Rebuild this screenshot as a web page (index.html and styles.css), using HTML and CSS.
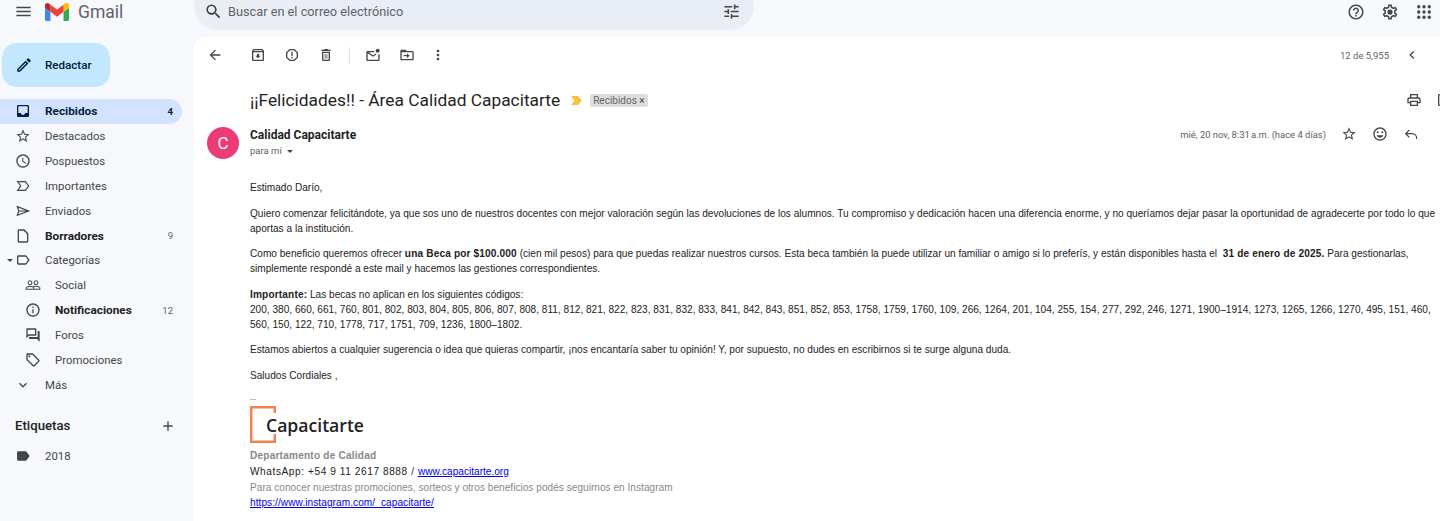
FILE: index.html
```html
<!DOCTYPE html>
<html lang="es">
<head>
    <meta charset="UTF-8">
    <meta name="viewport" content="width=device-width, initial-scale=1.0">
    <title>¡¡Felicidades!! - Área Calidad Capacitarte - Gmail</title>
    <link rel="stylesheet" href="styles.css">
</head>
<body>
    <svg class="sprite" aria-hidden="true">
        <symbol id="i-menu" viewBox="0 0 24 24"><path d="M3 18h18v-2H3v2zm0-5h18v-2H3v2zm0-7v2h18V6H3z"/></symbol>
        <symbol id="i-search" viewBox="0 0 24 24"><path d="M15.5 14h-.79l-.28-.27A6.471 6.471 0 0 0 16 9.5 6.5 6.5 0 1 0 9.5 16c1.61 0 3.09-.59 4.23-1.57l.27.28v.79l5 4.99L20.49 19l-4.99-5zm-6 0C7.01 14 5 11.99 5 9.5S7.01 5 9.5 5 14 7.01 14 9.5 11.99 14 9.5 14z"/></symbol>
        <symbol id="i-tune" viewBox="0 0 24 24"><path d="M3 17v2h6v-2H3zM3 5v2h10V5H3zm10 16v-2h8v-2h-8v-2h-2v6h2zM7 9v2H3v2h4v2h2V9H7zm14 4v-2H11v2h10zm-6-4h2V7h4V5h-4V3h-2v6z"/></symbol>
        <symbol id="i-help" viewBox="0 0 24 24"><path d="M11 18h2v-2h-2v2zm1-16C6.48 2 2 6.48 2 12s4.48 10 10 10 10-4.48 10-10S17.52 2 12 2zm0 18c-4.41 0-8-3.59-8-8s3.59-8 8-8 8 3.59 8 8-3.59 8-8 8zm0-14c-2.21 0-4 1.79-4 4h2c0-1.1.9-2 2-2s2 .9 2 2c0 2-3 1.75-3 5h2c0-2.25 3-2.5 3-5 0-2.21-1.79-4-4-4z"/></symbol>
        <symbol id="i-settings" viewBox="0 0 24 24"><path d="M19.43 12.98c.04-.32.07-.64.07-.98 0-.34-.03-.66-.07-.98l2.11-1.65c.19-.15.24-.42.12-.64l-2-3.46c-.09-.16-.26-.25-.44-.25-.06 0-.12.01-.17.03l-2.49 1c-.52-.4-1.08-.73-1.69-.98l-.38-2.65C14.46 2.18 14.25 2 14 2h-4c-.25 0-.46.18-.49.42l-.38 2.65c-.61.25-1.17.59-1.69.98l-2.49-1c-.06-.02-.12-.03-.18-.03-.17 0-.34.09-.43.25l-2 3.46c-.13.22-.07.49.12.64l2.11 1.65c-.04.32-.07.65-.07.98 0 .33.03.66.07.98l-2.11 1.65c-.19.15-.24.42-.12.64l2 3.46c.09.16.26.25.44.25.06 0 .12-.01.17-.03l2.49-1c.52.4 1.08.73 1.69.98l.38 2.65c.03.24.24.42.49.42h4c.25 0 .46-.18.49-.42l.38-2.65c.61-.25 1.17-.59 1.69-.98l2.49 1c.06.02.12.03.18.03.17 0 .34-.09.43-.25l2-3.46c.12-.22.07-.49-.12-.64l-2.11-1.65zm-1.98-1.71c.04.31.05.52.05.73 0 .21-.02.43-.05.73l-.14 1.13.89.7 1.08.84-.7 1.21-1.27-.51-1.04-.42-.9.68c-.43.32-.84.56-1.25.73l-1.06.43-.16 1.13-.2 1.35h-1.4l-.19-1.35-.16-1.13-1.06-.43c-.43-.18-.83-.41-1.23-.71l-.91-.7-1.06.43-1.27.51-.7-1.21 1.08-.84.89-.7-.14-1.13c-.03-.31-.05-.54-.05-.74s.02-.43.05-.73l.14-1.13-.89-.7-1.08-.84.7-1.21 1.27.51 1.04.42.9-.68c.43-.32.84-.56 1.25-.73l1.06-.43.16-1.13.2-1.35h1.39l.19 1.35.16 1.13 1.06.43c.43.18.83.41 1.23.71l.91.7 1.06-.43 1.27-.51.7 1.21-1.07.85-.89.7.14 1.13z"/><circle cx="12" cy="12" r="3.5"/></symbol>
        <symbol id="i-apps" viewBox="0 0 24 24"><circle cx="5" cy="5" r="2.2"/><circle cx="12" cy="5" r="2.2"/><circle cx="19" cy="5" r="2.2"/><circle cx="5" cy="12" r="2.2"/><circle cx="12" cy="12" r="2.2"/><circle cx="19" cy="12" r="2.2"/><circle cx="5" cy="19" r="2.2"/><circle cx="12" cy="19" r="2.2"/><circle cx="19" cy="19" r="2.2"/></symbol>
        <symbol id="i-edit" viewBox="0 0 24 24"><path d="M3 17.25V21h3.75L17.81 9.94l-3.75-3.75L3 17.25zM5.92 19H5v-.92l9.06-9.06.92.92L5.92 19zM20.71 7.04c.39-.39.39-1.02 0-1.41l-2.34-2.34c-.2-.2-.45-.29-.71-.29s-.51.09-.7.29l-1.83 1.83 3.75 3.75 1.83-1.83z"/></symbol>
        <symbol id="i-inbox" viewBox="0 0 24 24"><path d="M19 3H4.99c-1.11 0-1.98.89-1.98 2L3 19c0 1.1.88 2 1.99 2H19c1.1 0 2-.9 2-2V5c0-1.11-.9-2-2-2zm0 12h-4c0 1.66-1.35 3-3 3s-3-1.34-3-3H4.99V5H19v10z"/></symbol>
        <symbol id="i-star" viewBox="0 0 24 24"><path d="M22 9.24l-7.19-.62L12 2 9.19 8.63 2 9.24l5.46 4.73L5.82 21 12 17.27 18.18 21l-1.63-7.03L22 9.24zM12 15.4l-3.76 2.27 1-4.28-3.32-2.88 4.38-.38L12 6.1l1.71 4.04 4.38.38-3.32 2.88 1 4.28L12 15.4z"/></symbol>
        <symbol id="i-clock" viewBox="0 0 24 24"><path d="M11.99 2C6.47 2 2 6.48 2 12s4.47 10 9.99 10C17.52 22 22 17.52 22 12S17.52 2 11.99 2zM12 20c-4.42 0-8-3.58-8-8s3.58-8 8-8 8 3.58 8 8-3.58 8-8 8zm.5-13H11v6l5.25 3.15.75-1.23-4.5-2.67z"/></symbol>
        <symbol id="i-important" viewBox="0 0 24 24"><path class="line" d="M4 5.5h11.5l5 6.5-5 6.500H4l4.500-6.500z"/></symbol>
        <symbol id="i-send" viewBox="0 0 24 24"><path class="line" d="M3.500 5.500L20.500 12 3.500 18.500 5.800 12zM5.800 12h14.700"/></symbol>
        <symbol id="i-draft" viewBox="0 0 24 24"><path d="M14 2H6c-1.100 0-2 .9-2 2v16c0 1.100.9 2 2 2h12c1.100 0 2-.9 2-2V8l-6-6zM6 20V4h7l5 5v11H6z"/></symbol>
        <symbol id="i-label" viewBox="0 0 24 24"><path d="M17.630 5.840C17.270 5.330 16.670 5 16 5L5 5.010C3.900 5.010 3 5.900 3 7v10c0 1.100.9 1.990 2 1.990L16 19c.67 0 1.270-.33 1.630-.84L22 12l-4.370-6.160zM16 17H5V7h11l3.550 5L16 17z"/></symbol>
        <symbol id="i-label-full" viewBox="0 0 24 24"><path d="M17.630 5.840C17.270 5.330 16.670 5 16 5L5 5.010C3.900 5.010 3 5.900 3 7v10c0 1.100.9 1.990 2 1.990L16 19c.67 0 1.270-.33 1.630-.84L22 12l-4.370-6.160z"/></symbol>
        <symbol id="i-people" viewBox="0 0 24 24"><path d="M16.500 13c-1.200 0-3.070.34-4.500 1-1.430-.67-3.300-1-4.500-1C5.330 13 1 14.080 1 16.250V19h22v-2.750c0-2.170-4.330-3.250-6.500-3.250zm-4 4.500h-10v-1.250c0-.54 2.560-1.750 5-1.750s5 1.210 5 1.750v1.250zm9 0H14v-1.250c0-.46-.2-.86-.52-1.220.88-.3 1.960-.53 3.020-.53 2.440 0 5 1.210 5 1.750v1.250zM7.500 12c1.930 0 3.500-1.570 3.500-3.500S9.430 5 7.500 5 4 6.570 4 8.500 5.570 12 7.500 12zm0-5.500c1.100 0 2 .9 2 2s-.9 2-2 2-2-.9-2-2 .9-2 2-2zm9 5.500c1.930 0 3.500-1.570 3.500-3.500S18.430 5 16.500 5 13 6.570 13 8.500s1.570 3.500 3.500 3.500zm0-5.500c1.100 0 2 .9 2 2s-.9 2-2 2-2-.9-2-2 .9-2 2-2z"/></symbol>
        <symbol id="i-info" viewBox="0 0 24 24"><path d="M11 7h2v2h-2zm0 4h2v6h-2zm1-9C6.480 2 2 6.480 2 12s4.480 10 10 10 10-4.480 10-10S17.520 2 12 2zm0 18c-4.410 0-8-3.590-8-8s3.590-8 8-8 8 3.590 8 8-3.590 8-8 8z"/></symbol>
        <symbol id="i-forum" viewBox="0 0 24 24"><path d="M15 4v7H5.170L4 12.170V4h11m1-2H3c-.55 0-1 .45-1 1v14l4-4h10c.55 0 1-.45 1-1V3c0-.55-.45-1-1-1zm5 4h-2v9H6v2c0 .55.45 1 1 1h11l4 4V7c0-.55-.45-1-1-1z"/></symbol>
        <symbol id="i-tag" viewBox="0 0 24 24"><path d="M21.410 11.580l-9-9C12.050 2.220 11.550 2 11 2H4c-1.100 0-2 .9-2 2v7c0 .55.22 1.050.59 1.420l9 9c.36.36.86.58 1.410.58.55 0 1.050-.22 1.410-.59l7-7c.37-.36.59-.86.59-1.410 0-.55-.23-1.060-.59-1.420zM13 20.010L4 11V4h7v-.01l9 9-7 7.020z"/><circle cx="6.500" cy="6.500" r="1.500"/></symbol>
        <symbol id="i-down" viewBox="0 0 24 24"><path d="M16.590 8.590L12 13.170 7.410 8.590 6 10l6 6 6-6z"/></symbol>
        <symbol id="i-add" viewBox="0 0 24 24"><path d="M19 13h-6v6h-2v-6H5v-2h6V5h2v6h6v2z"/></symbol>
        <symbol id="i-back" viewBox="0 0 24 24"><path d="M20 11H7.830l5.590-5.590L12 4l-8 8 8 8 1.410-1.410L7.830 13H20v-2z"/></symbol>
        <symbol id="i-archive" viewBox="0 0 24 24"><path d="M20.540 5.230l-1.390-1.680C18.880 3.210 18.470 3 18 3H6c-.47 0-.88.21-1.160.55L3.460 5.230C3.170 5.570 3 6.020 3 6.500V19c0 1.100.9 2 2 2h14c1.100 0 2-.9 2-2V6.500c0-.48-.17-.93-.46-1.270zM6.240 5h11.520l.81.97H5.440l.8-.97zM5 19V8h14v11H5zm8.450-9h-2.900v3H8l4 4 4-4h-2.550z"/></symbol>
        <symbol id="i-report" viewBox="0 0 24 24"><path d="M15.730 3H8.270L3 8.270v7.460L8.270 21h7.460L21 15.730V8.270L15.730 3zM19 14.900L14.900 19H9.100L5 14.900V9.100L9.100 5h5.800L19 9.100v5.800zM11 7h2v7h-2zm0 8h2v2h-2z"/></symbol>
        <symbol id="i-trash" viewBox="0 0 24 24"><path d="M6 19c0 1.100.9 2 2 2h8c1.100 0 2-.9 2-2V7H6v12zM8 9h8v10H8V9zm7.500-5l-1-1h-5l-1 1H5v2h14V4h-3.500zM10 10.500h1.200v7H10zm2.800 0H14v7h-1.200z"/></symbol>
        <symbol id="i-unread" viewBox="0 0 24 24"><path d="M14 6H4c-1.100 0-2 .9-2 2v11c0 1.100.9 2 2 2h16c1.100 0 2-.9 2-2v-8h-2v8H4V9.500l8 5 5-3.100-1-1.700-4 2.500L5.400 8H14z"/><circle cx="19" cy="5.500" r="3"/></symbol>
        <symbol id="i-move" viewBox="0 0 24 24"><path d="M20 6h-8l-2-2H4c-1.100 0-2 .9-2 2v12c0 1.100.9 2 2 2h16c1.100 0 2-.9 2-2V8c0-1.100-.9-2-2-2zm0 12H4V8h16v10zM7 12h5V9.500l4 3.500-4 3.500V14H7z"/></symbol>
        <symbol id="i-more" viewBox="0 0 24 24"><path d="M12 8c1.100 0 2-.9 2-2s-.9-2-2-2-2 .9-2 2 .9 2 2 2zm0 2c-1.100 0-2 .9-2 2s.9 2 2 2 2-.9 2-2-.9-2-2-2zm0 6c-1.100 0-2 .9-2 2s.9 2 2 2 2-.9 2-2-.9-2-2-2z"/></symbol>
        <symbol id="i-prev" viewBox="0 0 24 24"><path d="M15.410 7.410L14 6l-6 6 6 6 1.410-1.410L10.830 12z"/></symbol>
        <symbol id="i-print" viewBox="0 0 24 24"><path d="M19 8h-1V3H6v5H5c-1.660 0-3 1.340-3 3v6h4v4h12v-4h4v-6c0-1.660-1.340-3-3-3zM8 5h8v3H8V5zm8 12v2H8v-4h8v2zm2-2v-2H6v2H4v-4c0-.55.45-1 1-1h14c.55 0 1 .45 1 1v4h-2z"/></symbol>
        <symbol id="i-window" viewBox="0 0 24 24"><path d="M5 3h14a2 2 0 0 1 2 2v14a2 2 0 0 1-2 2H5a2 2 0 0 1-2-2V5a2 2 0 0 1 2-2zm0 2v14h14V5z"/></symbol>
        <symbol id="i-smile" viewBox="0 0 24 24"><path d="M11.990 2C6.470 2 2 6.480 2 12s4.470 10 9.990 10C17.520 22 22 17.520 22 12S17.520 2 11.990 2zM12 20c-4.420 0-8-3.580-8-8s3.580-8 8-8 8 3.580 8 8-3.580 8-8 8zm0-2.500c2.330 0 4.310-1.460 5.110-3.500H6.890c.8 2.040 2.780 3.500 5.110 3.500z"/><circle cx="8.500" cy="9.500" r="1.500"/><circle cx="15.500" cy="9.500" r="1.500"/></symbol>
        <symbol id="i-reply" viewBox="0 0 24 24"><path class="line" d="M9.500 6L4 11.500 9.500 17M4 11.500h9.500a7 7 0 0 1 7 7v1"/></symbol>
    </svg>

    <header class="topbar">
        <div class="brand">
            <svg class="icon icon-menu"><use href="#i-menu"/></svg>
            <svg class="gmail-logo" viewBox="52 42 88 66">
                <path fill="#4285f4" d="M58 108h14V74L52 59v43c0 3.320 2.690 6 6 6"/>
                <path fill="#34a853" d="M120 108h14c3.320 0 6-2.690 6-6V59l-20 15"/>
                <path fill="#fbbc04" d="M120 48v26l20-15v-8c0-7.420-8.470-11.650-14.400-7.200"/>
                <path fill="#ea4335" d="M72 74V48l24 18 24-18v26L96 92"/>
                <path fill="#c5221f" d="M52 51v8l20 15V48l-5.600-4.200c-5.940-4.450-14.400-.22-14.400 7.200"/>
            </svg>
            <span class="brand-name">Gmail</span>
        </div>
        <div class="search">
            <svg class="icon icon-search"><use href="#i-search"/></svg>
            <span class="search-text">Buscar en el correo electrónico</span>
            <svg class="icon icon-tune"><use href="#i-tune"/></svg>
        </div>
        <div class="top-actions">
            <svg class="icon"><use href="#i-help"/></svg>
            <svg class="icon"><use href="#i-settings"/></svg>
            <svg class="icon icon-apps"><use href="#i-apps"/></svg>
        </div>
    </header>

    <div class="layout">
        <aside class="sidebar">
            <button class="compose">
                <svg class="icon icon-edit"><use href="#i-edit"/></svg>
                <span>Redactar</span>
            </button>

            <nav class="nav">
                <a class="nav-item active"><svg class="icon"><use href="#i-inbox"/></svg><span class="nav-label">Recibidos</span><span class="nav-count">4</span></a>
                <a class="nav-item"><svg class="icon"><use href="#i-star"/></svg><span class="nav-label">Destacados</span></a>
                <a class="nav-item"><svg class="icon"><use href="#i-clock"/></svg><span class="nav-label">Pospuestos</span></a>
                <a class="nav-item"><svg class="icon"><use href="#i-important"/></svg><span class="nav-label">Importantes</span></a>
                <a class="nav-item"><svg class="icon"><use href="#i-send"/></svg><span class="nav-label">Enviados</span></a>
                <a class="nav-item unread"><svg class="icon"><use href="#i-draft"/></svg><span class="nav-label">Borradores</span><span class="nav-count">9</span></a>
                <a class="nav-item"><span class="caret"></span><svg class="icon"><use href="#i-label"/></svg><span class="nav-label">Categorías</span></a>
                <a class="nav-item sub"><svg class="icon"><use href="#i-people"/></svg><span class="nav-label">Social</span></a>
                <a class="nav-item sub unread"><svg class="icon"><use href="#i-info"/></svg><span class="nav-label">Notificaciones</span><span class="nav-count">12</span></a>
                <a class="nav-item sub"><svg class="icon"><use href="#i-forum"/></svg><span class="nav-label">Foros</span></a>
                <a class="nav-item sub"><svg class="icon"><use href="#i-tag"/></svg><span class="nav-label">Promociones</span></a>
                <a class="nav-item"><svg class="icon"><use href="#i-down"/></svg><span class="nav-label">Más</span></a>
            </nav>

            <div class="labels-head">
                <span>Etiquetas</span>
                <svg class="icon"><use href="#i-add"/></svg>
            </div>
            <a class="nav-item"><svg class="icon"><use href="#i-label-full"/></svg><span class="nav-label">2018</span></a>
        </aside>

        <main class="mail">
            <div class="toolbar">
                <svg class="icon tool-back"><use href="#i-back"/></svg>
                <svg class="icon"><use href="#i-archive"/></svg>
                <svg class="icon"><use href="#i-report"/></svg>
                <svg class="icon"><use href="#i-trash"/></svg>
                <span class="tool-sep"></span>
                <svg class="icon"><use href="#i-unread"/></svg>
                <svg class="icon"><use href="#i-move"/></svg>
                <svg class="icon tool-more"><use href="#i-more"/></svg>
                <span class="pager">12 de 5,955</span>
                <svg class="icon"><use href="#i-prev"/></svg>
            </div>

            <div class="subject-row">
                <h1 class="subject">¡¡Felicidades!! - Área Calidad Capacitarte</h1>
                <svg class="marker" viewBox="0 0 12 10"><path d="M0 0h7.500L12 5 7.500 10H0l3.500-5z"/></svg>
                <span class="chip">Recibidos <b>×</b></span>
                <div class="subject-actions">
                    <svg class="icon"><use href="#i-print"/></svg>
                    <svg class="icon"><use href="#i-window"/></svg>
                </div>
            </div>

            <div class="sender-row">
                <div class="avatar">C</div>
                <div class="sender">
                    <div class="sender-name">Calidad Capacitarte</div>
                    <div class="sender-to">para mí <span class="caret"></span></div>
                </div>
                <div class="sender-meta">
                    <span class="date">mié, 20 nov, 8:31&#8239;a.m. (hace 4 días)</span>
                    <svg class="icon"><use href="#i-star"/></svg>
                    <svg class="icon"><use href="#i-smile"/></svg>
                    <svg class="icon"><use href="#i-reply"/></svg>
                </div>
            </div>

            <div class="body">
                <p>Estimado Darío,</p>
                <p>Quiero comenzar felicitándote, ya que sos uno de nuestros docentes con mejor valoración según las devoluciones de los alumnos. Tu compromiso y dedicación hacen una diferencia enorme, y no queríamos dejar pasar la oportunidad de agradecerte por todo lo que aportas a la institución.</p>
                <p>Como beneficio queremos ofrecer <b>una Beca por $100.000</b> (cien mil pesos) para que puedas realizar nuestros cursos. Esta beca también la puede utilizar un familiar o amigo si lo preferís, y están disponibles hasta el &nbsp;<b>31 de enero de 2025.</b> Para gestionarlas,<br>simplemente respondé a este mail y hacemos las gestiones correspondientes.</p>
                <p><b>Importante:</b> Las becas no aplican en los siguientes códigos:<br>200, 380, 660, 661, 760, 801, 802, 803, 804, 805, 806, 807, 808, 811, 812, 821, 822, 823, 831, 832, 833, 841, 842, 843, 851, 852, 853, 1758, 1759, 1760, 109, 266, 1264, 201, 104, 255, 154, 277, 292, 246, 1271, 1900–1914, 1273, 1265, 1266, 1270, 495, 151, 460, 560, 150, 122, 710, 1778, 717, 1751, 709, 1236, 1800–1802.</p>
                <p>Estamos abiertos a cualquier sugerencia o idea que quieras compartir, ¡nos encantaría saber tu opinión! Y, por supuesto, no dudes en escribirnos si te surge alguna duda.</p>
                <p>Saludos Cordiales ,</p>

                <div class="signature">
                    <div class="sig-dash">--</div>
                    <div class="cap-logo">
                        <svg class="cap-bracket" viewBox="0 0 26 37"><path d="M24.800 7V1.200H1.200v34.600h23.600V28"/></svg>
                        <span>Capacitarte</span>
                    </div>
                    <div class="sig-dept">Departamento de Calidad</div>
                    <div class="sig-phone">WhatsApp: +54 9 11 2617 8888 / <a href="#">www.capacitarte.org</a></div>
                    <div class="sig-note">Para conocer nuestras promociones, sorteos y otros beneficios podés seguirnos en Instagram</div>
                    <div class="sig-link"><a href="#">https://www.instagram.com/_capacitarte/</a></div>
                </div>
            </div>
        </main>
    </div>
</body>
</html>
```

FILE: styles.css
```css
* {
    box-sizing: border-box;
}

html,
body {
    height: 100%;
}

body {
    margin: 0;
    background: #f6f8fc;
    color: #202124;
    font-family: Roboto, 'Noto Sans', sans-serif;
    overflow: hidden;
}

.sprite {
    display: none;
}

.icon {
    width: 16px;
    height: 16px;
    fill: #444746;
    flex: none;
}

.line {
    fill: none;
    stroke: #444746;
    stroke-width: 1.800;
}

/* barra superior */
.topbar {
    display: flex;
    height: 37px;
}

.brand {
    display: flex;
    align-items: flex-start;
    width: 194px;
    padding: 3px 0 0 14px;
    flex: none;
}

.icon-menu {
    width: 19px;
    height: 19px;
    margin-top: -1px;
}

.gmail-logo {
    width: 24px;
    height: 18px;
    margin: 0 0 0 12px;
}

.brand-name {
    margin: -3px 0 0 9px;
    font-size: 17.500px;
    line-height: 24px;
    color: #5f6368;
}

.search {
    display: flex;
    align-items: center;
    width: 560px;
    height: 48px;
    margin-top: -18px;
    padding: 10px 13px 0 10px;
    background: #e9eef6;
    border-radius: 24px;
}

.icon-search {
    width: 19px;
    height: 19px;
    fill: #3c4043;
}

.search-text {
    flex: 1;
    margin-left: 5px;
    font-size: 12.750px;
    color: #5f6368;
}

.icon-tune {
    width: 19px;
    height: 19px;
}

.top-actions {
    display: flex;
    gap: 16px;
    align-items: flex-start;
    margin-left: auto;
    padding: 3px 7px 0 0;
}

.top-actions .icon {
    width: 18px;
    height: 18px;
}

/* lateral */
.layout {
    display: flex;
    height: 484px;
}

.sidebar {
    width: 194px;
    flex: none;
    padding-top: 6px;
}

.compose {
    display: flex;
    align-items: center;
    width: 108px;
    height: 44px;
    margin: 0 0 12px 2px;
    padding: 0 0 0 13px;
    background: #c2e7ff;
    border: 0;
    border-radius: 15px;
    font-family: inherit;
    font-size: 11.600px;
    font-weight: 500;
    color: #001d35;
}

.icon-edit {
    width: 18px;
    height: 18px;
    fill: #001d35;
    margin-right: 12px;
}

.nav-item {
    display: flex;
    align-items: center;
    position: relative;
    width: 182px;
    height: 24.850px;
    padding: 0 9px 0 15px;
    border-radius: 0 13px 13px 0;
    font-size: 11.400px;
    color: #444746;
}

.nav-item .icon {
    width: 16px;
    height: 16px;
}

.nav-label {
    margin-left: 14px;
}

.nav-count {
    margin-left: auto;
    font-size: 9.500px;
    color: #5f6368;
}

.nav-item.active {
    background: #d3e3fd;
    color: #041e49;
    font-size: 11.800px;
    font-weight: 700;
}

.nav-item.active .icon {
    fill: #041e49;
}

.nav-item.active .nav-count {
    color: #041e49;
    font-weight: 700;
}

.nav-item.unread .nav-label {
    font-size: 11.800px;
    font-weight: 700;
    color: #202124;
}

.nav-item.sub {
    padding-left: 25px;
}

.nav-item.sub .nav-count {
    font-weight: 400;
}

.nav-item > .caret {
    position: absolute;
    left: 7px;
    top: 11px;
}

.caret {
    display: inline-block;
    border-top: 3px solid #444746;
    border-left: 3px solid transparent;
    border-right: 3px solid transparent;
    vertical-align: middle;
}

.labels-head {
    display: flex;
    justify-content: space-between;
    align-items: center;
    height: 24px;
    margin-top: 16.500px;
    margin-bottom: 5.500px;
    padding: 0 18px 0 15px;
    font-size: 13.200px;
    font-weight: 500;
    color: #202124;
}

/* correo */
.mail {
    flex: 1;
    min-width: 0;
    background: #fff;
    border-radius: 12px 0 0 0;
    overflow: hidden;
}

.toolbar {
    display: flex;
    align-items: center;
    gap: 18px;
    height: 36px;
    padding: 0 20px 0 13px;
}

.tool-back {
    margin-right: 9px;
}

.tool-sep {
    width: 1px;
    height: 16px;
    background: #e0e0e0;
    margin: 0 -3px;
}

.tool-more {
    margin-left: -3px;
}

.pager {
    margin-left: auto;
    margin-right: -3px;
    font-size: 9.500px;
    color: #5f6368;
}

.subject-row {
    display: flex;
    align-items: center;
    height: 28px;
    margin-top: 13px;
    padding-left: 56px;
}

.subject {
    margin: 0;
    font-size: 17.350px;
    font-weight: 400;
    color: #1f1f1f;
}

.marker {
    width: 11px;
    height: 9px;
    margin-left: 11px;
    fill: #f9c23c;
}

.chip {
    margin-left: 8px;
    padding: 0 3px;
    background: #ddd;
    border-radius: 2px;
    font-size: 10px;
    line-height: 13px;
    color: #666;
}

.chip b {
    font-weight: 400;
    color: #444;
}

.subject-actions {
    display: flex;
    gap: 14px;
    margin-left: auto;
    margin-right: -12px;
}

.sender-row {
    display: flex;
    height: 42px;
    margin-top: 8px;
    padding: 5px 21px 0 13px;
}

.avatar {
    width: 32px;
    height: 32px;
    flex: none;
    background: #ec3c78;
    border-radius: 50%;
    font-size: 17px;
    line-height: 32px;
    text-align: center;
    color: #fff;
}

.sender {
    margin-left: 11px;
}

.sender-name {
    font-size: 12px;
    font-weight: 700;
    line-height: 16px;
    color: #1f1f1f;
}

.sender-to {
    font-size: 9.500px;
    line-height: 15px;
    color: #5e5e5e;
}

.sender-to .caret {
    margin-left: 3px;
}

.sender-meta {
    display: flex;
    align-items: center;
    gap: 15px;
    height: 14px;
    margin-left: auto;
    font-size: 9.440px;
    color: #5e5e5e;
}

.body {
    width: 1190px;
    margin-left: 56px;
    margin-top: 16px;
    font-family: 'Liberation Sans', Arial, sans-serif;
    font-size: 10.100px;
    line-height: 15px;
    color: #222;
}

.body p {
    margin: 0 0 10.500px;
}

.body b {
    letter-spacing: 0.150px;
}

.signature {
    margin-top: 0.500px;
}

.sig-dash {
    font-size: 9px;
    line-height: 13px;
    color: #888;
}

.cap-logo {
    position: relative;
    height: 37px;
    margin-bottom: 5px;
    padding: 8px 0 0 16px;
    font-family: 'Open Sans', sans-serif;
    font-size: 17.600px;
    font-weight: 600;
    line-height: 22px;
    color: #222;
}

.cap-bracket {
    position: absolute;
    left: 0;
    top: 0;
    width: 26px;
    height: 37px;
    fill: none;
    stroke: #ef8450;
    stroke-width: 2.400;
}

.cap-logo span {
    position: relative;
}

.sig-dept {
    font-weight: 700;
    color: #888;
    letter-spacing: 0.200px;
    line-height: 16px;
}

.sig-phone {
    line-height: 16px;
    letter-spacing: 0.580px;
}

.sig-note {
    line-height: 15px;
    color: #888;
    letter-spacing: 0.020px;
}

.sig-link {
    line-height: 16px;
}

.signature a {
    color: #00e;
    letter-spacing: 0;
}

.sig-link a {
    letter-spacing: 0.070px;
}
```
